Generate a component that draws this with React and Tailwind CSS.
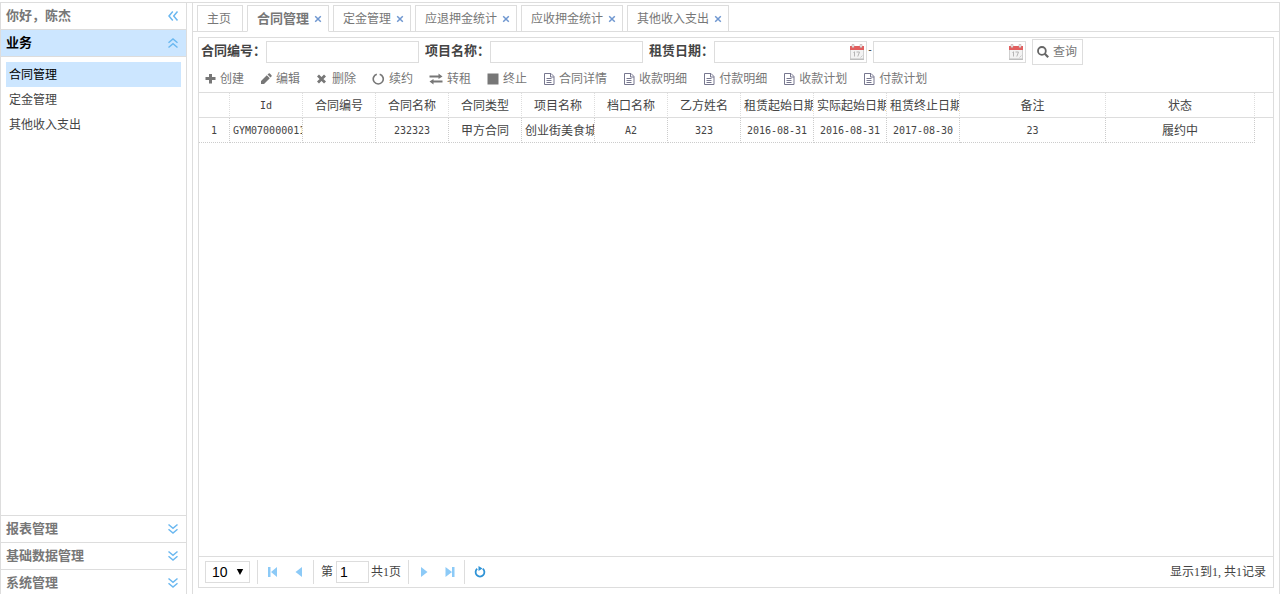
import React, { useState } from "react";

const sections = ["报表管理", "基础数据管理", "系统管理"];
const menuItems = ["合同管理", "定金管理", "其他收入支出"];
const tabs = ["主页", "合同管理", "定金管理", "应退押金统计", "应收押金统计", "其他收入支出"];

const mono = "font-['DejaVu_Sans_Mono','Noto_Sans_CJK_SC',monospace] text-[10px]";

const columns = [
  { title: "Id", value: "GYM070000011", width: "w-[73px]", latin: true },
  { title: "合同编号", value: "", width: "w-[73px]" },
  { title: "合同名称", value: "232323", width: "w-[73px]", latin: true },
  { title: "合同类型", value: "甲方合同", width: "w-[73px]" },
  { title: "项目名称", value: "创业街美食城", width: "w-[73px]" },
  { title: "档口名称", value: "A2", width: "w-[73px]", latin: true },
  { title: "乙方姓名", value: "323", width: "w-[73px]", latin: true },
  { title: "租赁起始日期", value: "2016-08-31", width: "w-[73px]", latin: true },
  { title: "实际起始日期", value: "2016-08-31", width: "w-[73px]", latin: true },
  { title: "租赁终止日期", value: "2017-08-30", width: "w-[73px]", latin: true },
  { title: "备注", value: "23", width: "w-[146px]", latin: true },
  { title: "状态", value: "履约中", width: "" },
];

const PlusIcon = () => (
  <svg className="w-3 h-3" viewBox="0 0 12 12" fill="currentColor">
    <path d="M5 1h3v3h3.500v3H8v3.500H5V7H1.500V4H5z" />
  </svg>
);

const PencilIcon = () => (
  <svg className="w-3 h-3" viewBox="0 0 12 12" fill="currentColor">
    <path d="M6.800 2.200l3 3L4 11H1V8zM7.500 1.500L8.700.5q.6-.4 1.200.1l1.600 1.600q.5.600 0 1.200l-1 1.100z" />
  </svg>
);

const RemoveIcon = () => (
  <svg className="w-3 h-3" viewBox="0 0 12 12" fill="none" stroke="currentColor" strokeWidth="2.8">
    <path d="M2 2.500l7 7M9 2.500l-7 7" />
  </svg>
);

const RenewIcon = () => (
  <svg className="w-[13px] h-3" viewBox="0 0 13 12" fill="none" stroke="currentColor" strokeWidth="1.600">
    <path d="M4.800 1.200A5 5 0 1 0 7.700 1.200" />
  </svg>
);

const ExchangeIcon = () => (
  <svg className="w-3.5 h-3" viewBox="0 0 14 12" fill="currentColor">
    <path d="M.5 2.500H9.500V.5L13.500 3.500 9.500 6V4.500H.5zM13.500 9.500H4.500V11.500L.5 8.500 4.500 6V7.500H13.500z" />
  </svg>
);

const StopIcon = () => (
  <svg className="w-3 h-3" viewBox="0 0 12 12" fill="currentColor">
    <path d="M.5 .5h11v11H.5z" />
  </svg>
);

const FileIcon = () => (
  <svg className="w-3 h-3" viewBox="0 0 12 12" fill="none" stroke="#77778f">
    <path d="M1.500.5H8l3 3V11.500H1.500zM7.500.5v3.500h3.500M3.500 5.500h5M3.500 7.500h5M3.500 9.500h5" />
  </svg>
);

const SearchIcon = () => (
  <svg className="w-3 h-3" viewBox="0 0 12 12" fill="none" stroke="#666" strokeWidth="1.800">
    <circle cx="4.900" cy="4.900" r="3.900" />
    <path d="M7.800 7.800l3.400 3.400" strokeWidth="2.200" />
  </svg>
);

const CalendarIcon = () => (
  <svg className="w-4 h-4" viewBox="0 0 16 16">
    <path d="M1.500 5h13v10h-13z" fill="#f3f3f3" stroke="#d0d0d0" />
    <path d="M1 15.300h14" stroke="#b5b5b5" />
    <path d="M1 2h14v4H1z" fill="#e25f5f" />
    <path d="M3 .5h2v3H3zM11 .5h2v3h-2z" fill="#eee" stroke="#b99" strokeWidth=".5" />
    <path d="M4.500 8.500l1-.7V12.500M7.500 8h3L8.800 12.500" fill="none" stroke="#b5b5b5" />
    <path d="M11.500 13.500l2-2" stroke="#ccc" />
  </svg>
);

const Chevrons = ({ turn }) => (
  <svg className={`w-3 h-3 ${turn}`} viewBox="0 0 12 12" fill="none" stroke="#6bb8f0" strokeWidth="1.500">
    <path d="M1.500 1.500L6 5.300l4.500-3.800M1.500 6.200L6 10l4.500-3.800" />
  </svg>
);

const tools = [
  { name: "创建", icon: PlusIcon },
  { name: "编辑", icon: PencilIcon },
  { name: "删除", icon: RemoveIcon },
  { name: "续约", icon: RenewIcon },
  { name: "转租", icon: ExchangeIcon },
  { name: "终止", icon: StopIcon },
  { name: "合同详情", icon: FileIcon },
  { name: "收款明细", icon: FileIcon },
  { name: "付款明细", icon: FileIcon },
  { name: "收款计划", icon: FileIcon },
  { name: "付款计划", icon: FileIcon },
];

const SectionHeader = ({ title, open, className }) => (
  <button
    type="button"
    className={`flex h-[27px] w-full shrink-0 items-center justify-between border-[#ddd] pl-[5px] pr-[7px] text-[13px] leading-4 font-bold ${className}`}
  >
    {title}
    <Chevrons turn={open ? "rotate-180" : ""} />
  </button>
);

const Sidebar = () => {
  const [active, setActive] = useState("合同管理");

  return (
    <aside className="box-content flex h-[calc(100vh-1px)] w-[185px] shrink-0 flex-col border border-[#ddd]">
      <div className="flex h-[27px] shrink-0 items-center justify-between border-b border-[#ddd] pl-[5px] pr-[7px] text-[13px] font-bold text-[#777]">
        你好，陈杰
        <button type="button" aria-label="收起">
          <Chevrons turn="rotate-90" />
        </button>
      </div>
      <SectionHeader title="业务" open className="border-b bg-[#cce6ff] text-black" />
      <ul className="flex-1 p-[5px]">
        {menuItems.map((item) => (
          <li key={item}>
            <button
              type="button"
              onClick={() => setActive(item)}
              className={`block h-[25px] w-full px-[3px] text-left ${active === item ? "bg-[#cce6ff] text-black" : ""}`}
            >
              {item}
            </button>
          </li>
        ))}
      </ul>
      {sections.map((title) => (
        <SectionHeader key={title} title={title} className="border-t text-[#777]" />
      ))}
    </aside>
  );
};

const TabBar = () => {
  const [current, setCurrent] = useState(1);

  return (
    <div className="flex h-[29px] items-end gap-1 border-b border-[#ddd] pl-1 text-[#777]">
      {tabs.map((tab, i) => (
        <div
          key={tab}
          className={`-mb-px flex h-[27px] items-center border border-[#ddd] bg-white pl-[9px] ${
            i === current ? "border-b-white text-[13px] font-bold" : ""
          } ${i === 0 ? "pr-[11px]" : "pr-1.5"}`}
        >
          <button type="button" onClick={() => setCurrent(i)}>
            {tab}
          </button>
          {i > 0 && (
            <button type="button" aria-label={`关闭${tab}`} className="ml-[5px] flex w-2 justify-center">
              <svg className="w-2 h-2" viewBox="0 0 8 8" fill="none" stroke="#6f97d0" strokeWidth="1.500">
                <path d="M1.200 1.200l5.600 5.600M6.800 1.200L1.200 6.800" />
              </svg>
            </button>
          )}
        </div>
      ))}
    </div>
  );
};

const inputStyle = "h-[22px] w-[153px] border border-[#ddd] px-1 outline-none";
const labelStyle = "w-[65px] pb-0.5 text-[13px] font-bold";

const DateField = ({ id, label }) => (
  <span className="relative flex">
    <input id={id} aria-label={label} className={inputStyle} />
    <button type="button" aria-label={`选择${label}`} className="absolute right-0.5 top-[3px]">
      <CalendarIcon />
    </button>
  </span>
);

const SearchBar = () => (
  <form className="flex h-7 items-center pl-0.5" onSubmit={(e) => e.preventDefault()}>
    <label htmlFor="no" className={labelStyle}>合同编号：</label>
    <input id="no" className={inputStyle} />
    <label htmlFor="project" className={`ml-1.5 ${labelStyle}`}>项目名称：</label>
    <input id="project" className={inputStyle} />
    <label htmlFor="start" className={`ml-1.5 ${labelStyle}`}>租赁日期：</label>
    <DateField id="start" label="租赁日期" />
    <span className={`w-1.5 pb-1 text-center ${mono}`}>-</span>
    <DateField id="end" label="租赁结束日期" />
    <button type="submit" className="ml-1.5 flex h-[26px] items-center gap-1 border border-[#ddd] pl-1 pr-[5px] text-[#777]">
      <SearchIcon />
      查询
    </button>
  </form>
);

const Toolbar = () => (
  <div className="flex h-[26px] items-center pl-[5px] text-[#777]">
    {tools.map(({ name, icon: Icon }) => (
      <button key={name} type="button" className="mr-4 flex items-center gap-1">
        <Icon />
        {name}
      </button>
    ))}
  </div>
);

const DataTable = () => (
  <div className="flex flex-1 items-start border-t border-[#ddd]">
    <table className="w-[calc(100%-18px)] table-fixed border-separate border-spacing-0 text-center">
      <thead>
        <tr className="h-[25px]">
          <th className="w-[31px] border-b border-r border-[#ddd] [border-right-style:dotted]" />
          {columns.map((c) => (
            <th
              key={c.title}
              className={`${c.width} overflow-hidden border-b border-r border-[#ddd] px-[3px] pt-0.5 font-normal whitespace-nowrap [border-right-style:dotted] ${
                c.title === "Id" ? mono : ""
              }`}
            >
              {c.title}
            </th>
          ))}
        </tr>
      </thead>
      <tbody>
        <tr className="h-[25px]">
          <td className={`border-b border-r border-dotted border-[#ccc] pt-0.5 ${mono}`}>1</td>
          {columns.map((c) => (
            <td
              key={c.title}
              className={`overflow-hidden border-b border-r border-dotted border-[#ccc] px-[3px] pt-0.5 whitespace-nowrap ${c.latin ? mono : ""}`}
            >
              {c.value}
            </td>
          ))}
        </tr>
      </tbody>
    </table>
    <div className="h-[25px] w-[18px] shrink-0 border-b border-[#ddd]" />
  </div>
);

const PageButton = ({ label, color = "text-[#8ccaf7]", children }) => (
  <button type="button" aria-label={label} className={`flex h-6 w-[26px] items-center justify-center ${color}`}>
    <svg className="w-3 h-3" viewBox="0 0 12 12" fill="currentColor">
      {children}
    </svg>
  </button>
);

const Separator = ({ className }) => <span className={`h-6 w-px bg-[#ddd] ${className}`} />;

const Pager = () => (
  <div className="flex h-[31px] items-center border-t border-[#ddd] pl-1.5 pr-[7px]">
    <span className="relative flex">
      <select
        aria-label="每页条数"
        className="h-[22px] w-[45px] appearance-none border border-[#ddd] bg-white pl-1.5 font-['Liberation_Sans',sans-serif] text-sm leading-4 text-black"
      >
        <option>10</option>
        <option>20</option>
        <option>50</option>
      </select>
      <svg className="pointer-events-none absolute right-1.5 top-[7px] w-2 h-2" viewBox="0 0 8 8">
        <path d="M.8 1h6.400L4 7z" />
      </svg>
    </span>
    <Separator className="ml-[7px] mr-0.5" />
    <PageButton label="首页">
      <path d="M1 1h2.500v10H1zM10 1v10L4 6z" />
    </PageButton>
    <PageButton label="上一页">
      <path d="M9 1v10L2.500 6z" />
    </PageButton>
    <Separator className="ml-px mr-[7px]" />
    <label htmlFor="page">第</label>
    <input
      id="page"
      defaultValue="1"
      className="ml-[3px] mr-0.5 h-[22px] w-[33px] border border-[#ddd] px-[3px] font-['Liberation_Sans',sans-serif] text-sm text-black outline-none"
    />
    共1页
    <Separator className="ml-[7px] mr-0.5" />
    <PageButton label="下一页">
      <path d="M3 1v10L9.500 6z" />
    </PageButton>
    <PageButton label="末页">
      <path d="M1.500 1v10L8 6zM8 1H10.500v10H8z" />
    </PageButton>
    <Separator className="ml-px mr-0.5" />
    <PageButton label="刷新" color="text-[#2f93d6]">
      <path d="M3.200 2.800A4.400 4.400 0 1 0 8.800 2.800" fill="none" stroke="currentColor" strokeWidth="1.800" />
      <path d="M4.500 0L8.500 2.500 4.500 5z" />
    </PageButton>
    <span className="ml-auto">显示1到1, 共1记录</span>
  </div>
);

export default function App() {
  return (
    <div
      lang="zh-CN"
      className="flex h-screen overflow-hidden bg-white pt-0.5 text-xs leading-4 text-[#444] font-['Liberation_Serif','Noto_Sans_CJK_SC',sans-serif]"
    >
      <Sidebar />
      <div className="w-[5px] shrink-0 border-t border-[#ddd]" />
      <main className="flex min-w-0 flex-1 flex-col border-x border-t border-[#ddd]">
        <TabBar />
        <div className="flex min-h-0 flex-1 flex-col p-[5px] pb-1.5">
          <div className="flex flex-1 flex-col border border-[#ddd]">
            <SearchBar />
            <Toolbar />
            <DataTable />
            <Pager />
          </div>
        </div>
      </main>
    </div>
  );
}
